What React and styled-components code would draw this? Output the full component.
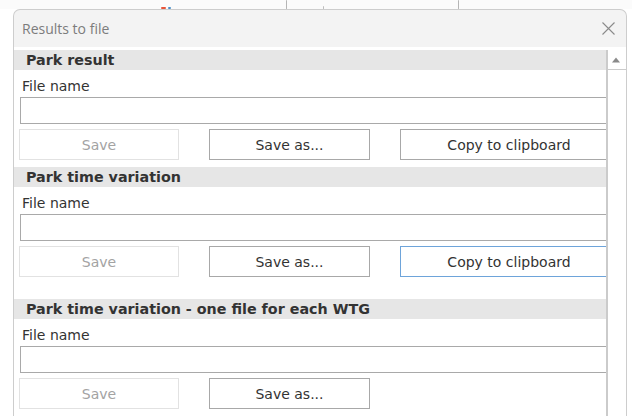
import React from "react";
import styled, { createGlobalStyle } from "styled-components";

const GlobalStyle = createGlobalStyle`
  html, body {
    margin: 0;
    padding: 0;
    background: #ffffff;
  }
  * { box-sizing: border-box; }
`;

const Page = styled.div`
  width: 632px;
  height: 416px;
  overflow: hidden;
  background: #ffffff;
  font-family: "DejaVu Sans", Verdana, sans-serif;
`;

/* strip of the main window that peeks out above the dialog */
const Backdrop = styled.div`
  height: 9px;
  display: flex;
  align-items: flex-end;
  background: #fbfbfb;
`;

const Mark = styled.span`
  display: block;
  flex: none;
  margin-left: ${(p) => p.$offset}px;
  width: ${(p) => p.$w}px;
  height: ${(p) => p.$h}px;
  background: ${(p) => p.$color};
  border-radius: 1px;
`;

const Dialog = styled.div`
  margin-left: 13px;
  width: 614px;
  height: 407px;
  display: flex;
  flex-direction: column;
  border: 1px solid #cdcdcd;
  border-bottom: none;
  border-radius: 7px 7px 0 0;
  background: #f3f3f3;
  overflow: hidden;
`;

const TitleBar = styled.div`
  height: 37px;
  flex: none;
  display: flex;
  align-items: center;
  justify-content: space-between;
  padding: 0 10px 0 8px;
`;

const Title = styled.span`
  font-family: "Open Sans", "Noto Sans", sans-serif;
  font-size: 14px;
  color: #7c7c7c;
`;

const CloseButton = styled.button`
  width: 16px;
  height: 16px;
  padding: 0;
  border: none;
  background: transparent;
  display: flex;
  align-items: center;
  justify-content: center;
`;

const Body = styled.div`
  flex: 1;
  display: flex;
  padding-top: 3px;
  background: #ffffff;
  min-height: 0;
`;

const ScrollArea = styled.div`
  width: 592px;
  flex: none;
  overflow: hidden;
`;

const ScrollBar = styled.div`
  flex: 1;
  border-left: 2px solid #cbcbcb;
  background: #ffffff;
`;

const ScrollButton = styled.div`
  height: 20px;
  border-bottom: 1px solid #cbcbcb;
  display: flex;
  align-items: center;
  justify-content: center;
  padding-right: 2px;
`;

const Section = styled.section`
  padding-bottom: ${(p) => p.$bottom}px;
`;

const SectionHeader = styled.div`
  height: 20px;
  padding-left: 12px;
  background: #e6e6e6;
  font-weight: bold;
  font-size: 14.3px;
  line-height: 21px;
  color: #333333;
  white-space: nowrap;
`;

const FieldLabel = styled.div`
  height: 27px;
  padding: 0 0 2px 8px;
  display: flex;
  align-items: flex-end;
  font-size: 14px;
  line-height: 18px;
  color: #333333;
`;

const FileInput = styled.input`
  display: block;
  margin-left: 6px;
  width: 620px;
  height: 27px;
  border: 1px solid #a9a9a9;
  background: #ffffff;
  outline: none;
  padding: 0 4px;
  font: inherit;
`;

const ButtonRow = styled.div`
  margin-top: 5px;
  padding-left: 5px;
  display: flex;
  gap: 30px;
  width: 700px;
`;

const ActionButton = styled.button`
  flex: none;
  width: ${(p) => p.$w}px;
  height: 31px;
  padding: 0;
  background: #ffffff;
  font-family: "DejaVu Sans", Verdana, sans-serif;
  font-size: 14px;
  color: ${(p) => (p.disabled ? "#a3a3a3" : "#333333")};
  border: 1px solid
    ${(p) => (p.disabled ? "#e2e2e2" : p.$focused ? "#6ea4da" : "#a8a8a8")};
`;

const CloseIcon = () => (
  <svg width="13" height="13" viewBox="0 0 13 13">
    <path d="M0.5 0.5 L12.5 12.5 M12.5 0.5 L0.5 12.5" stroke="#8a8a8a" strokeWidth="1.1" fill="none" />
  </svg>
);

const UpArrow = () => (
  <svg width="8" height="6" viewBox="0 0 8 6">
    <path d="M0 5.5 L4 0.5 L8 5.5 Z" fill="#8a8a8a" />
  </svg>
);

const sections = [
  { title: "Park result", copy: true, focused: false, bottom: 7 },
  { title: "Park time variation", copy: true, focused: true, bottom: 22 },
  { title: "Park time variation - one file for each WTG", copy: false, focused: false, bottom: 7 },
];

function ExportSection({ title, copy, focused, bottom }) {
  return (
    <Section $bottom={bottom}>
      <SectionHeader>{title}</SectionHeader>
      <FieldLabel>File name</FieldLabel>
      <FileInput type="text" readOnly value="" />
      <ButtonRow>
        <ActionButton $w={160} disabled>Save</ActionButton>
        <ActionButton $w={161}>Save as...</ActionButton>
        {copy && (
          <ActionButton $w={218} $focused={focused}>Copy to clipboard</ActionButton>
        )}
      </ButtonRow>
    </Section>
  );
}

export default function App() {
  return (
    <>
      <GlobalStyle />
      <Page>
        <Backdrop>
          <Mark $offset={161} $w={5} $h={2} $color="#e8553a" />
          <Mark $offset={2} $w={3} $h={2} $color="#4a8fc9" />
          <Mark $offset={115} $w={1} $h={9} $color="#b5b5b5" />
          <Mark $offset={36} $w={1} $h={3} $color="#bdbdbd" />
          <Mark $offset={134} $w={1} $h={9} $color="#b5b5b5" />
        </Backdrop>
        <Dialog>
          <TitleBar>
            <Title>Results to file</Title>
            <CloseButton aria-label="Close">
              <CloseIcon />
            </CloseButton>
          </TitleBar>
          <Body>
            <ScrollArea>
              {sections.map((s) => (
                <ExportSection key={s.title} {...s} />
              ))}
            </ScrollArea>
            <ScrollBar>
              <ScrollButton>
                <UpArrow />
              </ScrollButton>
            </ScrollBar>
          </Body>
        </Dialog>
      </Page>
    </>
  );
}
